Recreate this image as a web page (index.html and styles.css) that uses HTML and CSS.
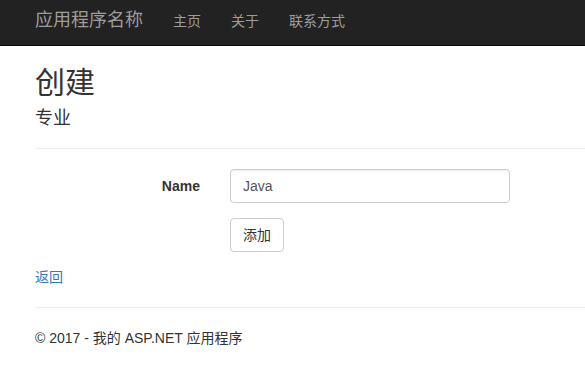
FILE: index.html
```html
<!DOCTYPE html>
<html lang="zh-CN">
<head>
<meta charset="utf-8">
<title>创建</title>
<link rel="stylesheet" href="styles.css">
</head>
<body>
<header class="navbar">
  <a class="brand" href="#">应用程序名称</a>
  <nav class="nav">
    <a href="#">主页</a>
    <a href="#">关于</a>
    <a href="#">联系方式</a>
  </nav>
</header>
<main class="body-content">
  <h2 class="title">创建</h2>
  <h4 class="subtitle">专业</h4>
  <hr class="rule">
  <form class="form">
    <div class="form-group">
      <label class="control-label" for="name">Name</label>
      <input class="form-control" id="name" type="text" value="Java">
    </div>
    <div class="form-group offset">
      <button class="btn" type="button">添加</button>
    </div>
  </form>
  <div class="back"><a href="#">返回</a></div>
  <hr class="rule">
  <footer class="footer">
    <p>© 2017 - 我的 ASP.NET 应用程序</p>
  </footer>
</main>
</body>
</html>
```

FILE: styles.css
```css
html, body {
  margin: 0;
  padding: 0;
  background: #fff;
}
body {
  font-family: "Liberation Sans", "Noto Sans CJK SC", sans-serif;
  font-size: 14px;
  line-height: 20px;
  color: #333;
}
a {
  text-decoration: none;
}
.navbar {
  display: flex;
  align-items: flex-start;
  height: 45px;
  background: #222;
  border-bottom: 1px solid #080808;
  padding-left: 35px;
}
.brand {
  font-size: 18px;
  line-height: 41px;
  color: #9d9d9d;
}
.nav {
  display: flex;
  padding-left: 15px;
}
.nav a {
  padding: 0 15px;
  line-height: 42px;
  color: #9d9d9d;
}
.body-content {
  padding-left: 35px;
  overflow: hidden;
}
.title {
  margin: 20px 0 10px;
  font-size: 30px;
  line-height: 33px;
  font-weight: 400;
}
.subtitle {
  margin: 10px 0 10px;
  font-size: 18px;
  line-height: 19px;
  font-weight: 400;
}
.rule {
  margin: 20px 0;
  border: 0;
  border-top: 1px solid #eee;
  height: 0;
}
.form {
  margin: 0;
}
.form-group {
  display: flex;
  align-items: flex-start;
  margin-bottom: 15px;
}
.control-label {
  width: 165px;
  text-align: right;
  padding-top: 7px;
  font-weight: 700;
  margin-right: 30px;
}
.form-control {
  box-sizing: border-box;
  width: 280px;
  height: 34px;
  padding: 6px 12px;
  font-family: inherit;
  font-size: 14px;
  color: #555;
  background: #fff;
  border: 1px solid #ccc;
  border-radius: 4px;
  box-shadow: inset 0 1px 1px rgba(0, 0, 0, .075);
  margin: 0;
}
.offset {
  padding-left: 195px;
}
.btn {
  box-sizing: border-box;
  height: 34px;
  padding: 6px 12px;
  font-family: inherit;
  font-size: 14px;
  line-height: 20px;
  color: #333;
  background: #fff;
  border: 1px solid #ccc;
  border-radius: 4px;
  margin: 0;
}
.back a {
  color: #337ab7;
}
.footer p {
  margin: 0 0 10px;
}
```
